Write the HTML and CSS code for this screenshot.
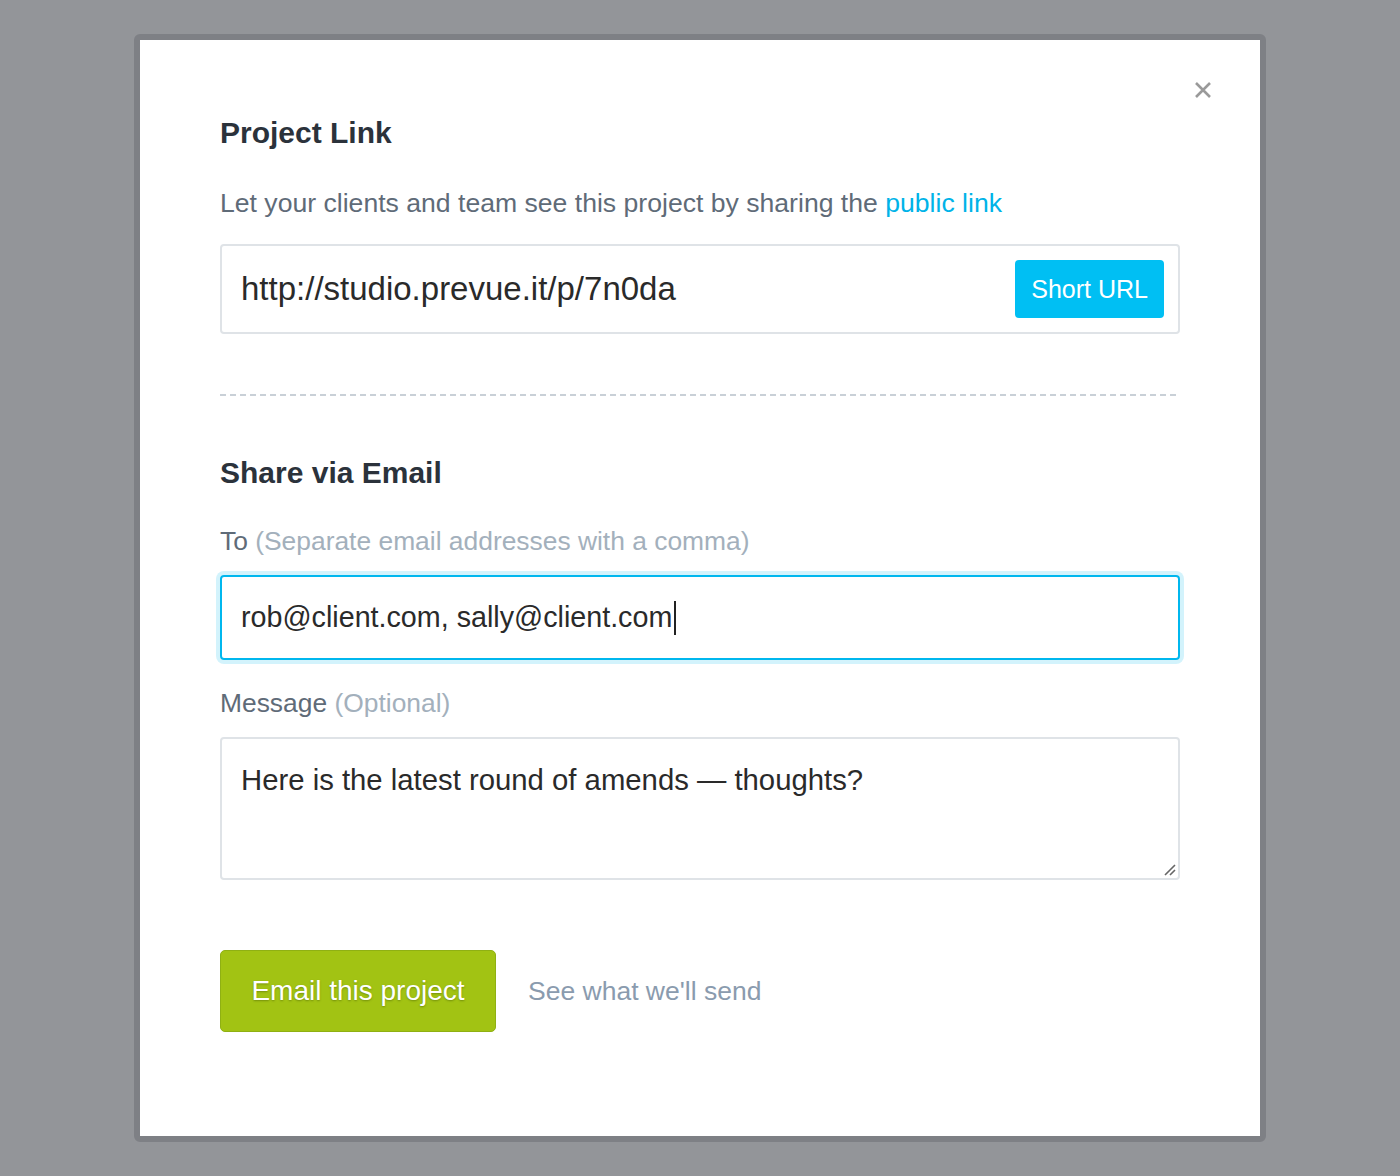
FILE: index.html
```html
<!DOCTYPE html>
<html>
<head>
<meta charset="utf-8">
<link rel="stylesheet" href="styles.css">
</head>
<body>
<div class="modal">
  <div class="close" aria-label="close">
    <svg width="18" height="18" viewBox="0 0 18 18"><path d="M2 2 L16 16 M16 2 L2 16" stroke="#9a9a9a" stroke-width="2.6" stroke-linecap="butt"/></svg>
  </div>
  <h2 class="title">Project Link</h2>
  <p class="lead">Let your clients and team see this project by sharing the <a class="link" href="#">public link</a></p>
  <div class="urlbox">
    <span class="urltext">http://studio.prevue.it/p/7n0da</span>
    <span class="shortbtn">Short URL</span>
  </div>
  <div class="divider"></div>
  <h2 class="title title2">Share via Email</h2>
  <div class="label"><span class="lbl-main">To</span> <span class="lbl-hint">(Separate email addresses with a comma)</span></div>
  <div class="field focused"><span class="fieldtext">rob@client.com, sally@client.com</span><span class="caret"></span></div>
  <div class="label label2"><span class="lbl-main">Message</span> <span class="lbl-hint">(Optional)</span></div>
  <div class="textarea">
    <span class="fieldtext">Here is the latest round of amends — thoughts?</span>
    <svg class="grip" width="14" height="14" viewBox="0 0 14 14"><path d="M13 3 L3 13 M13 8 L8 13" stroke="#666" stroke-width="1.6"/></svg>
  </div>
  <div class="actions">
    <span class="sendbtn">Email this project</span>
    <a class="preview" href="#">See what we'll send</a>
  </div>
</div>
</body>
</html>
```
FILE: styles.css
```css
html, body {
  margin: 0;
  padding: 0;
}
body {
  background: #939599;
  font-family: "Liberation Sans", Arial, sans-serif;
  padding-top: 34px;
  height: 1176px;
  box-sizing: border-box;
  overflow: hidden;
}
.modal {
  position: relative;
  margin-left: 134px;
  width: 1120px;
  height: 1096px;
  box-sizing: content-box;
  background: #fff;
  border: 6px solid #7e8085;
  border-radius: 6px;
  padding: 0;
}
.modal > * {
  margin-left: 80px;
  margin-right: 80px;
}
.modal > .close {
  position: absolute;
  top: 41px;
  left: 1054px;
  margin: 0;
  width: 18px;
  height: 18px;
}
.close svg { display: block; }
.title {
  margin-top: 0;
  margin-bottom: 0;
  padding-top: 75px;
  font-size: 30px;
  line-height: 36px;
  font-weight: bold;
  color: #2b323b;
}
.title2 {
  padding-top: 0;
  margin-top: 59px;
}
.lead {
  margin-top: 36px;
  margin-bottom: 0;
  font-size: 26.6px;
  line-height: 32px;
  color: #5f6b78;
}
.link {
  color: #00b3e8;
  text-decoration: none;
}
.urlbox {
  margin-top: 25px;
  height: 90px;
  box-sizing: border-box;
  border: 2px solid #dfe3e7;
  border-radius: 4px;
  display: flex;
  align-items: center;
  justify-content: space-between;
  padding: 0 14px 0 19px;
}
.urltext {
  font-size: 33px;
  color: #2a2a2a;
}
.shortbtn {
  background: #00bff3;
  color: #fff;
  font-size: 25px;
  height: 58px;
  line-height: 58px;
  padding: 0 16px;
  border-radius: 4px;
}
.divider {
  margin-top: 60px;
  height: 2px;
  background-image: repeating-linear-gradient(to right, #c9d0d7 0, #c9d0d7 6px, transparent 6px, transparent 10px);
}
.label {
  margin-top: 34px;
  font-size: 26.4px;
  line-height: 32px;
}
.label2 {
  margin-top: 27px;
}
.lbl-main { color: #5f6b78; }
.lbl-hint { color: #a3b0bc; }
.field {
  margin-top: 18px;
  height: 85px;
  box-sizing: border-box;
  border: 2px solid #00b7ee;
  border-radius: 4px;
  box-shadow: 0 0 0 4px #d3f3fc;
  display: flex;
  align-items: center;
  padding-left: 19px;
}
.fieldtext {
  font-size: 28.7px;
  color: #2a2a2a;
}
.caret {
  display: inline-block;
  width: 2px;
  height: 34px;
  background: #222;
  margin-left: 2px;
}
.textarea {
  position: relative;
  margin-top: 18px;
  height: 143px;
  box-sizing: border-box;
  border: 2px solid #dfe3e7;
  border-radius: 4px;
  padding: 23px 19px 0;
}
.textarea .fieldtext {
  font-size: 29.3px;
  line-height: 36px;
}
.grip {
  position: absolute;
  right: 2px;
  bottom: 2px;
}
.actions {
  margin-top: 70px;
  display: flex;
  align-items: center;
}
.sendbtn {
  display: inline-block;
  box-sizing: border-box;
  width: 276px;
  height: 82px;
  line-height: 80px;
  text-align: center;
  background: #a2c313;
  border: 1px solid #8fb013;
  border-radius: 5px;
  color: #fff;
  font-size: 28px;
  text-shadow: 0 1px 2px rgba(60, 80, 0, 0.45);
}
.preview {
  margin-left: 32px;
  font-size: 26.5px;
  color: #8a9bae;
  text-decoration: none;
}
```
